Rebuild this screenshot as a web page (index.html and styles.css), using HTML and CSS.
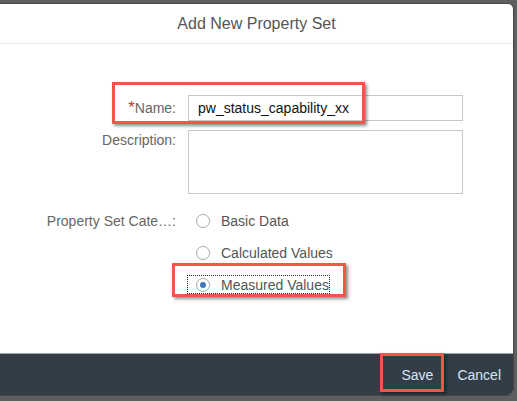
FILE: index.html
```html
<!DOCTYPE html>
<html>
<head>
<meta charset="utf-8">
<link rel="stylesheet" href="styles.css">
</head>
<body>
<div class="dialog">
  <header class="dlg-head">Add New Property Set</header>
  <main class="dlg-body">
    <form class="form">
      <label class="lbl lbl-name"><span class="req">*</span>Name:</label>
      <div class="field"><div class="input">pw_status_capability_xx</div></div>
      <label class="lbl lbl-desc">Description:</label>
      <div class="field"><div class="textarea"></div></div>
      <label class="lbl lbl-cat">Property Set Cate…:</label>
      <div class="field radios">
        <div class="radio"><span class="circle"></span><span>Basic Data</span></div>
        <div class="radio"><span class="circle"></span><span>Calculated Values</span></div>
        <div class="radio focus"><span class="circle on"></span><span>Measured Values</span></div>
      </div>
    </form>
  </main>
  <footer class="dlg-foot">
    <button class="btn" type="button">Save</button>
    <button class="btn" type="button">Cancel</button>
  </footer>
  <div class="mark mark-name"></div>
  <div class="mark mark-radio"></div>
  <div class="mark mark-save"></div>
</div>
</body>
</html>
```
FILE: styles.css
```css
html, body {
  margin: 0;
  padding: 0;
}
body {
  background: #5e5e5e;
  width: 517px;
  height: 401px;
  overflow: hidden;
  font-family: "Liberation Sans", Arial, sans-serif;
  padding-top: 4px;
  box-sizing: border-box;
}
.dialog {
  position: relative;
  width: 513px;
  background: #fff;
  border-radius: 0 5px 5px 0;
  box-shadow: 0 0 0 1px rgba(0,0,0,0.25);
}
.dlg-head {
  height: 39px;
  line-height: 39px;
  text-align: center;
  font-size: 16px;
  color: #555;
  border-bottom: 1px solid #e6e6e6;
  border-top-right-radius: 5px;
}
.dlg-body {
  height: 309px;
  box-sizing: border-box;
  padding-top: 51px;
}
.form {
  display: grid;
  grid-template-columns: 176px 275px;
  column-gap: 12px;
  margin: 0;
}
.lbl {
  text-align: right;
  font-size: 14px;
  color: #666;
  line-height: 20px;
  white-space: nowrap;
}
.lbl-name { padding-top: 3px; }
.req { color: #c0392b; font-size: 17px; }
.lbl-desc { margin-top: 9px; }
.lbl-cat { margin-top: 11px; padding-top: 6px; }
.input {
  height: 26px;
  box-sizing: border-box;
  border: 1px solid #c8c8c8;
  padding-left: 9px;
  font-size: 14px;
  line-height: 24px;
  color: #111;
}
.textarea {
  margin-top: 9px;
  height: 64px;
  box-sizing: border-box;
  border: 1px solid #c8c8c8;
}
.radios {
  margin-top: 11px;
  display: flex;
  flex-direction: column;
  align-items: flex-start;
}
.radio {
  height: 32px;
  display: flex;
  align-items: center;
  padding-left: 8px;
  font-size: 14px;
  color: #555;
  gap: 11px;
  white-space: nowrap;
  box-sizing: border-box;
}
.radio.focus {
  height: 17px;
  margin-top: 7px;
  outline: 1px dotted #222;
  outline-offset: 0;
}
.circle {
  width: 14px;
  height: 14px;
  flex: none;
  box-sizing: border-box;
  border: 1px solid #a9a9a9;
  border-radius: 50%;
  background: #fff;
  display: flex;
  align-items: center;
  justify-content: center;
}
.circle.on::after {
  content: "";
  width: 6px;
  height: 6px;
  border-radius: 50%;
  background: #3d78b4;
}
.dlg-foot {
  height: 42px;
  box-sizing: border-box;
  background: #333d48;
  border-top: 1px solid #9aa5b1;
  border-radius: 0 0 5px 0;
  display: flex;
  justify-content: flex-end;
  align-items: center;
}
.btn {
  background: none;
  border: none;
  font-family: "Liberation Sans", Arial, sans-serif;
  font-size: 14px;
  color: #d5e6f7;
  padding: 0 12px;
  height: 41px;
}
.mark {
  position: absolute;
  border: 3px solid #f2554a;
  box-shadow: 2px 2px 3px rgba(0,0,0,0.45);
}
.mark-name { left: 112px; top: 78px; width: 247px; height: 36px; }
.mark-radio { left: 172px; top: 259px; width: 168px; height: 28px; }
.mark-save { left: 380px; top: 349px; width: 58px; height: 33px; }
```
